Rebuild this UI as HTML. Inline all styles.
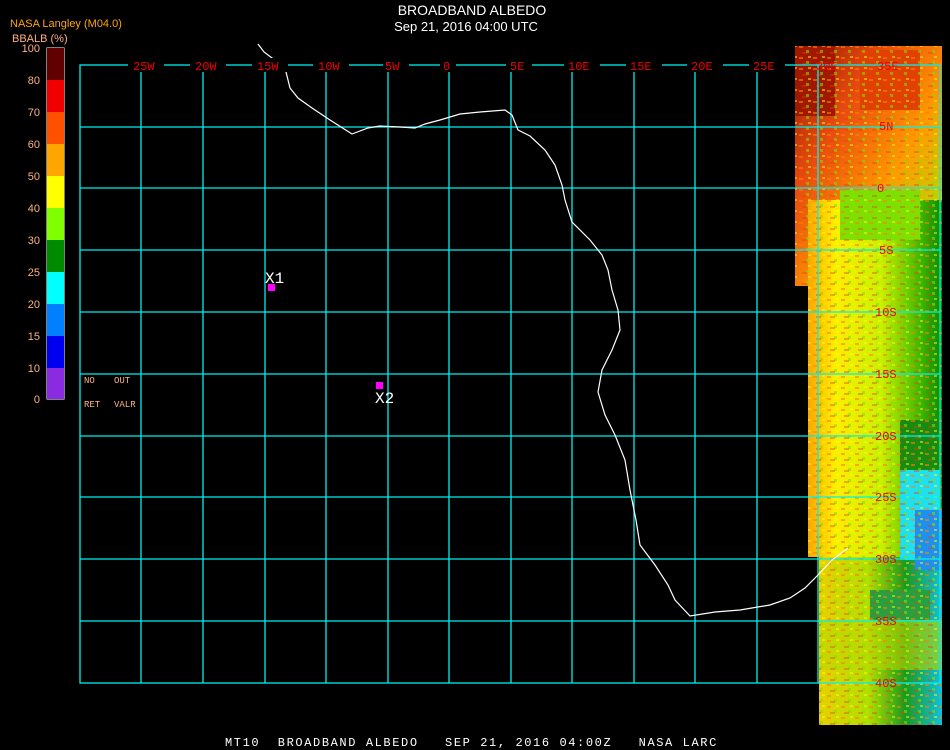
<!DOCTYPE html>
<html><head><meta charset="utf-8"><style>
html,body{margin:0;padding:0;background:#000;}
body{width:950px;height:750px;overflow:hidden;position:relative;font-family:"Liberation Mono",monospace;}
svg{position:absolute;left:0;top:0}
</style></head><body>
<svg width="950" height="750" xmlns="http://www.w3.org/2000/svg">
<defs>
<linearGradient id="g1" x1="0" y1="0" x2="1" y2="1">
<stop offset="0" stop-color="#8b1a00"/><stop offset="0.3" stop-color="#e84a10"/><stop offset="0.6" stop-color="#ff9a00"/><stop offset="1" stop-color="#8fff00"/>
</linearGradient>
<linearGradient id="g2" x1="0" y1="0" x2="1" y2="0">
<stop offset="0" stop-color="#ffa500"/><stop offset="0.2" stop-color="#ffee00"/><stop offset="0.55" stop-color="#c8f000"/><stop offset="0.8" stop-color="#50c000"/><stop offset="1" stop-color="#0a8a00"/>
</linearGradient>
<linearGradient id="g3" x1="0" y1="0" x2="1" y2="0">
<stop offset="0" stop-color="#e8d000"/><stop offset="0.4" stop-color="#b0e000"/><stop offset="0.7" stop-color="#1a9a20"/><stop offset="1" stop-color="#10c0e0"/>
</linearGradient>
<pattern id="tex" width="14" height="11" patternUnits="userSpaceOnUse">
<rect x="1" y="2" width="4" height="2" fill="#ff8000" opacity="0.6"/>
<rect x="8" y="6" width="3" height="3" fill="#80e000" opacity="0.6"/>
<rect x="4" y="8" width="5" height="2" fill="#e04000" opacity="0.4"/>
<rect x="10" y="1" width="3" height="2" fill="#ffff00" opacity="0.5"/>
</pattern>
</defs>
<!-- data strip -->
<rect x="795" y="46" width="147" height="240" fill="url(#g1)"/>
<rect x="808" y="200" width="134" height="357" fill="url(#g2)"/>
<rect x="819" y="557" width="123" height="168" fill="url(#g3)"/>
<rect x="795" y="46" width="40" height="70" fill="#a01800"/>
<rect x="860" y="50" width="60" height="60" fill="#e04000"/>
<rect x="840" y="190" width="80" height="50" fill="#7ee000"/>
<rect x="900" y="420" width="42" height="140" fill="#1a8a10"/>
<rect x="900" y="470" width="40" height="90" fill="#20e0f0"/>
<rect x="915" y="510" width="27" height="60" fill="#2090f0"/>
<rect x="820" y="620" width="122" height="50" fill="#b8d800" opacity="0.6"/>
<rect x="870" y="590" width="60" height="30" fill="#28a040"/>
<rect x="795" y="46" width="147" height="240" fill="url(#tex)"/>
<rect x="808" y="286" width="134" height="271" fill="url(#tex)"/>
<rect x="819" y="557" width="123" height="168" fill="url(#tex)"/>
<!-- grid -->
<g stroke="#00f0f0" stroke-width="1.3" fill="none">
<rect x="80" y="65" width="860" height="618"/>
<path d="M141 65V683M203 65V683M265 65V683M326 65V683M388 65V683M449 65V683M511 65V683M572 65V683M634 65V683M695 65V683M757 65V683M818 65V683"/>
<path d="M80 127H940M80 188H940M80 250H940M80 312H940M80 374H940M80 436H940M80 497H940M80 559H940M80 621H940"/>
</g>
<!-- coast -->
<polyline fill="none" stroke="#fff" stroke-width="1.2" points="258,44 264,52 272,58 280,62 286,72 290,88 298,98 312,108 330,120 352,134 368,128 380,126 400,127 415,128 425,124 440,120 460,114 480,112 505,110 512,115 518,130 530,136 545,150 555,165 562,185 565,200 572,222 590,240 602,255 608,270 612,290 618,310 620,330 612,350 602,370 598,392 605,415 615,435 625,460 630,490 636,520 640,545 655,565 668,585 675,600 690,616 715,612 740,610 770,605 790,598 805,588 818,575 832,560 848,548"/>
<!-- markers -->
<rect x="268" y="284" width="7" height="7" fill="#ff00ff"/>
<rect x="376" y="382" width="7" height="7" fill="#ff00ff"/>
<text x="265" y="283" fill="#fff" font-family="Liberation Mono" font-size="16">X1</text>
<text x="375" y="403" fill="#fff" font-family="Liberation Mono" font-size="16">X2</text>
<!-- lon labels -->
<g fill="#f00000" font-family="Liberation Mono" font-size="12">
<rect x="128" y="58" width="36" height="14" fill="#000"/><text x="133" y="70">25W</text>
<rect x="190" y="58" width="36" height="14" fill="#000"/><text x="195" y="70">20W</text>
<rect x="252" y="58" width="36" height="14" fill="#000"/><text x="257" y="70">15W</text>
<rect x="313" y="58" width="36" height="14" fill="#000"/><text x="318" y="70">10W</text>
<rect x="383" y="58" width="26" height="14" fill="#000"/><text x="385" y="70">5W</text>
<rect x="440" y="58" width="16" height="14" fill="#000"/><text x="443" y="70">0</text>
<rect x="506" y="58" width="26" height="14" fill="#000"/><text x="510" y="70">5E</text>
<rect x="564" y="58" width="36" height="14" fill="#000"/><text x="568" y="70">10E</text>
<rect x="626" y="58" width="36" height="14" fill="#000"/><text x="630" y="70">15E</text>
<rect x="687" y="58" width="36" height="14" fill="#000"/><text x="691" y="70">20E</text>
<rect x="749" y="58" width="36" height="14" fill="#000"/><text x="753" y="70">25E</text>
<text x="816" y="70">30E</text>
<text x="877" y="70">35E</text>
<text x="879" y="130">5N</text><text x="877" y="192">0</text>
<text x="879" y="254">5S</text><text x="875" y="316">10S</text>
<text x="875" y="378">15S</text><text x="875" y="440">20S</text>
<text x="875" y="501">25S</text><text x="875" y="563">30S</text>
<text x="875" y="625">35S</text><text x="875" y="687">40S</text>
</g>
<!-- titles -->
<g font-family="Liberation Sans" text-anchor="middle" fill="#fff">
<text x="472" y="15" font-size="14">BROADBAND ALBEDO</text>
<text x="466" y="31" font-size="13">Sep 21, 2016 04:00 UTC</text>
</g>
<text x="10" y="27" fill="#ffa500" font-family="Liberation Sans" font-size="11">NASA Langley (M04.0)</text>
<text x="12" y="42" fill="#ffb080" font-family="Liberation Sans" font-size="11">BBALB (%)</text>
<!-- colorbar -->
<rect x="46.5" y="47.5" width="18" height="352" fill="#fff"/>
<g>
<rect x="47" y="48" width="17" height="32" fill="#600000"/>
<rect x="47" y="80" width="17" height="32" fill="#f00000"/>
<rect x="47" y="112" width="17" height="32" fill="#ff5000"/>
<rect x="47" y="144" width="17" height="32" fill="#ffa500"/>
<rect x="47" y="176" width="17" height="32" fill="#ffff00"/>
<rect x="47" y="208" width="17" height="32" fill="#80ff00"/>
<rect x="47" y="240" width="17" height="32" fill="#008a00"/>
<rect x="47" y="272" width="17" height="32" fill="#00ffff"/>
<rect x="47" y="304" width="17" height="32" fill="#0080ff"/>
<rect x="47" y="336" width="17" height="32" fill="#0000f0"/>
<rect x="47" y="368" width="17" height="31" fill="#8a2be2"/>
</g>
<g fill="#ffb080" font-family="Liberation Sans" font-size="11" text-anchor="end">
<text x="40" y="52">100</text><text x="40" y="84">80</text><text x="40" y="116">70</text>
<text x="40" y="148">60</text><text x="40" y="180">50</text><text x="40" y="212">40</text>
<text x="40" y="244">30</text><text x="40" y="276">25</text><text x="40" y="308">20</text>
<text x="40" y="340">15</text><text x="40" y="372">10</text><text x="40" y="403">0</text>
</g>
<g fill="#ffb080" font-family="Liberation Mono" font-size="9">
<text x="84" y="383">NO</text><text x="114" y="383">OUT</text>
<text x="84" y="407">RET</text><text x="114" y="407">VALR</text>
</g>
<text x="225" y="746" fill="#fff" font-family="Liberation Mono" font-size="12" letter-spacing="1.6" xml:space="preserve">MT10  BROADBAND ALBEDO   SEP 21, 2016 04:00Z   NASA LARC</text>
</svg>
</body></html>
